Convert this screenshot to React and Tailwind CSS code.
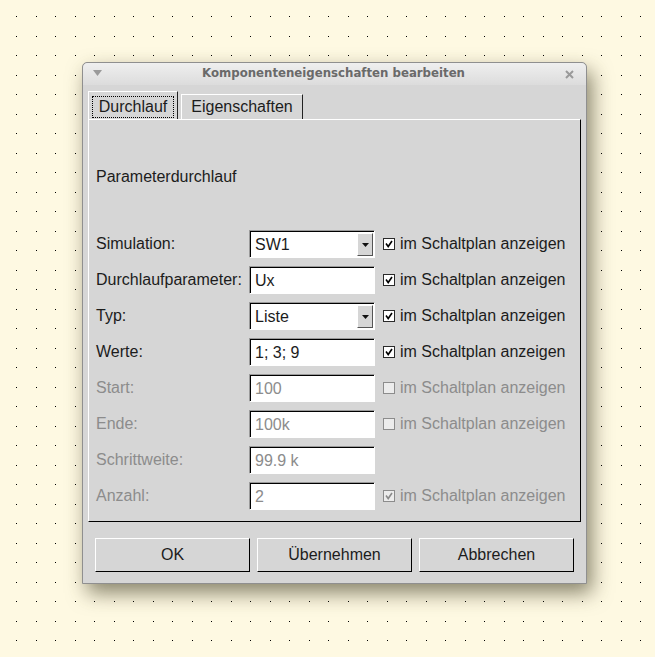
import React from 'react';

const rows = [
    { label: 'Simulation:', value: 'SW1', combo: true, check: true, enabled: true },
    { label: 'Durchlaufparameter:', value: 'Ux', check: true, enabled: true },
    { label: 'Typ:', value: 'Liste', combo: true, check: true, enabled: true },
    { label: 'Werte:', value: '1; 3; 9', check: true, enabled: true },
    { label: 'Start:', value: '100', check: false, enabled: false },
    { label: 'Ende:', value: '100k', check: false, enabled: false },
    { label: 'Schrittweite:', value: '99.9 k', enabled: false },
    { label: 'Anzahl:', value: '2', check: true, enabled: false },
];

function DotGrid() {
    const dots = [];
    for (let i = 0; i < 33; i++) {
        for (let j = 0; j < 33; j++) {
            dots.push(
                <rect key={`${i}-${j}`} x={Math.round(16 + i * 19.5)} y={Math.round(16 + j * 19.5)} width="1" height="1" fill="#000" />
            );
        }
    }
    return (
        <svg className="absolute inset-0" width="655" height="657">
            {dots}
        </svg>
    );
}

function CheckBox({ checked, enabled }) {
    return (
        <div className={`w-[12px] h-[12px] border flex items-center justify-center ${enabled ? 'border-[#2a2a2a] bg-white' : 'border-[#8c8c8c] bg-[#ececec]'}`}>
            {checked && (
                <svg width="8" height="8" viewBox="0 0 8 8">
                    <path d="M1 3.5 L3.2 6.5 L7 1" fill="none" stroke={enabled ? '#000' : '#8a8a8a'} strokeWidth="1.6" />
                </svg>
            )}
        </div>
    );
}

function Field({ row }) {
    return (
        <div className="w-[126px] h-[28px] border border-t-[#9a9a9a] border-l-[#9a9a9a] border-b-white border-r-white">
            <div className={`h-full flex items-center border-t border-l border-t-black border-l-black pl-[4px] pr-[1px] ${row.enabled ? 'text-[#1c1c1c]' : 'text-[#8c8c8c]'} bg-white`}>
                <span className="flex-1">{row.value}</span>
                {row.combo && (
                    <div className="w-[16px] h-[23px] bg-[#d6d6d6] border border-t-white border-l-white border-b-[#555] border-r-[#555] flex items-center justify-center">
                        <svg width="7" height="4" viewBox="0 0 7 4">
                            <path d="M0 0 H7 L3.5 4 Z" fill="#111" />
                        </svg>
                    </div>
                )}
            </div>
        </div>
    );
}

export default function App() {
    return (
        <div className="relative w-[655px] h-[657px] bg-[#fef9e2] overflow-hidden font-['Liberation_Sans',Arial,sans-serif]">
            <DotGrid />
            <div className="absolute left-[82px] top-[62px] w-[505px] h-[522px] rounded-t-[5px] border border-[#8f8f8f] bg-[#d6d6d6] shadow-[5px_9px_20px_rgba(60,55,30,0.6)] flex flex-col">
                <div className="h-[22px] rounded-t-[5px] bg-gradient-to-b from-[#efefef] to-[#dcdcdc] flex items-center px-[10px] relative">
                    <svg width="9" height="6" viewBox="0 0 9 6" className="mt-[-2px]">
                        <path d="M0 0 H9 L4.5 6 Z" fill="#9a9a9a" />
                    </svg>
                    <div className="flex-1 text-center text-[11.75px] font-bold text-[#6a6a6a] font-['DejaVu_Sans',sans-serif]">
                        Komponenteneigenschaften bearbeiten
                    </div>
                    <svg width="9" height="9" viewBox="0 0 9 9" className="mr-[2px]">
                        <path d="M1 1 L8 8 M8 1 L1 8" stroke="#9a9a9a" strokeWidth="2" />
                    </svg>
                </div>
                <div className="flex flex-col pt-[6px] px-[5px] text-[16px] text-[#1c1c1c]">
                    <div className="flex items-end h-[28px] relative z-10">
                        <div className="w-[90px] h-[28px] border-t border-l border-t-white border-l-white border-r border-r-[#222] bg-[#d6d6d6] flex items-center justify-center px-[3px] pt-[2px]">
                            <div className="border border-dotted border-black w-full h-[22px] flex items-center justify-center">Durchlauf</div>
                        </div>
                        <div className="ml-[3px] w-[122px] h-[25px] border-t border-l border-t-white border-l-white border-r border-r-[#222] flex items-center justify-center">
                            Eigenschaften
                        </div>
                    </div>
                    <div className="h-[403px] border border-t-white border-l-white border-b-black border-r-black flex flex-col px-[7px] pt-[48px]">
                        <div className="h-[18px] leading-[18px]">Parameterdurchlauf</div>
                        <div className="mt-[44px] flex flex-col gap-[8px]">
                            {rows.map((row) => (
                                <div key={row.label} className="flex items-center h-[28px]">
                                    <div className={`w-[153px] ${row.enabled ? 'text-[#1c1c1c]' : 'text-[#8c8c8c]'}`}>{row.label}</div>
                                    <Field row={row} />
                                    {row.check !== undefined && (
                                        <div className="flex items-center ml-[8px] gap-[5px]">
                                            <CheckBox checked={row.check} enabled={row.enabled} />
                                            <span className={row.enabled ? 'text-[#1c1c1c]' : 'text-[#8c8c8c]'}>im Schaltplan anzeigen</span>
                                        </div>
                                    )}
                                </div>
                            ))}
                        </div>
                    </div>
                    <div className="flex gap-[7px] px-[7px] mt-[16px]">
                        {['OK', 'Übernehmen', 'Abbrechen'].map((b) => (
                            <div key={b} className="flex-1 h-[34px] border border-t-white border-l-white border-b-black border-r-black flex items-center justify-center text-[#1c1c1c]">
                                {b}
                            </div>
                        ))}
                    </div>
                </div>
            </div>
        </div>
    );
}
